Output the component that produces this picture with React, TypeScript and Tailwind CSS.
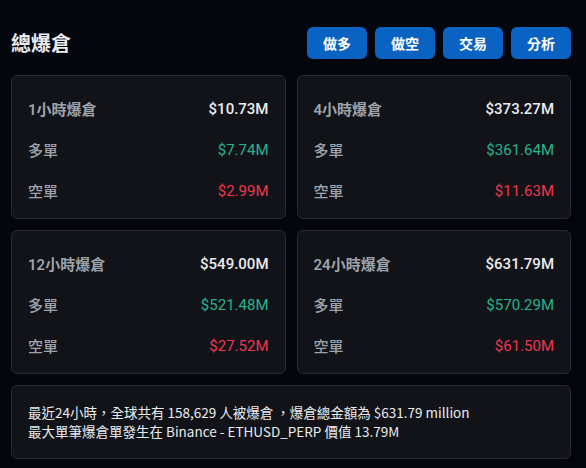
import React from "react";

type Card = { title: string; total: string; long: string; short: string };

const cards: Card[] = [
  { title: "1小時爆倉", total: "$10.73M", long: "$7.74M", short: "$2.99M" },
  { title: "4小時爆倉", total: "$373.27M", long: "$361.64M", short: "$11.63M" },
  { title: "12小時爆倉", total: "$549.00M", long: "$521.48M", short: "$27.52M" },
  { title: "24小時爆倉", total: "$631.79M", long: "$570.29M", short: "$61.50M" },
];

const cjk = { fontFamily: '"Noto Sans CJK TC", "Noto Sans", sans-serif' };
const num = { fontFamily: 'Roboto, "Noto Sans CJK TC", sans-serif' };

function StatCard({ c }: { c: Card }) {
  return (
    <div className="flex h-[144px] flex-col rounded-md border border-[#272a31] bg-[#111318] px-4 pb-[6px] pt-[13px]">
      <div className="flex h-[41px] items-center justify-between">
        <span className="text-[15px] font-semibold text-[#9ea3ab]" style={cjk}>
          <span style={num} className="font-semibold">{c.title.match(/^\d+/)?.[0]}</span>
          {c.title.replace(/^\d+/, "")}
        </span>
        <span className="text-[15px] font-medium text-[#eaecef]" style={num}>{c.total}</span>
      </div>
      <div className="flex h-[41px] items-center justify-between">
        <span className="text-[15px] font-medium text-[#9ea3ab]" style={cjk}>多單</span>
        <span className="text-[15px] text-[#27b48c]" style={num}>{c.long}</span>
      </div>
      <div className="flex h-[41px] items-center justify-between">
        <span className="text-[15px] font-medium text-[#9ea3ab]" style={cjk}>空單</span>
        <span className="text-[15px] text-[#f1364e]" style={num}>{c.short}</span>
      </div>
    </div>
  );
}

export default function App() {
  return (
    <div className="h-[468px] w-[586px] bg-[#03060d] px-[11px] pt-[27px]" style={cjk}>
      <div className="flex h-8 items-center justify-between pr-1">
        <h1 className="text-[20px] font-bold text-[#eaecef]">總爆倉</h1>
        <div className="flex gap-2">
          {["做多", "做空", "交易", "分析"].map((b) => (
            <button
              key={b}
              className="h-8 w-[60px] rounded-md bg-[#0a62c3] text-[14px] font-bold text-white"
            >
              {b}
            </button>
          ))}
        </div>
      </div>
      <div className="mt-4 grid grid-cols-2 gap-[11px] pr-[4px]">
        {cards.map((c) => (
          <StatCard key={c.title} c={c} />
        ))}
      </div>
      <div className="mr-[4px] mt-[11px] flex h-[74px] flex-col justify-center rounded-md border border-[#272a31] bg-[#111318] px-4 text-[13.5px] leading-[19px] text-[#eaecef]">
        <div>最近24小時，全球共有 158,629 人被爆倉 ，爆倉總金額為 $631.79 million</div>
        <div>最大單筆爆倉單發生在 Binance - ETHUSD_PERP 價值 13.79M</div>
      </div>
    </div>
  );
}
